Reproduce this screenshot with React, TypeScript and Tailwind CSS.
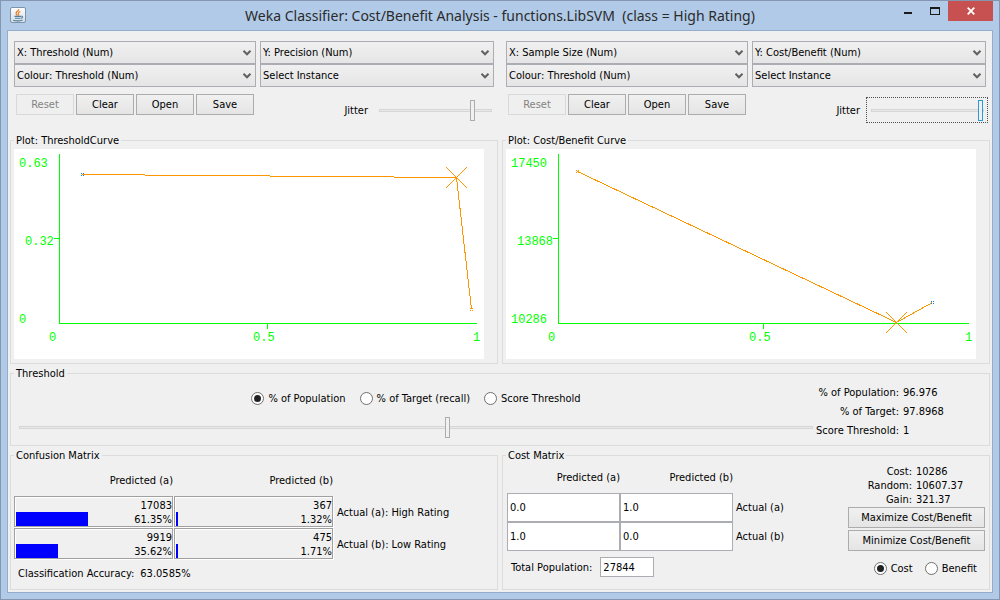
import { useState, type ReactNode } from "react";

function JavaIcon() {
  return (
    <svg width="17" height="17" viewBox="0 0 17 17" aria-hidden="true">
      <defs>
        <linearGradient id="java-bg" x1="0" y1="0" x2="0" y2="1">
          <stop offset="0" stopColor="#ffffff" />
          <stop offset="1" stopColor="#d3dce4" />
        </linearGradient>
      </defs>
      <rect x="0.5" y="0.5" width="15" height="15" rx="1.5" fill="url(#java-bg)" stroke="#7d93a8" />
      <path d="M8.6 2.2c.6 1.700-2.700 2.400-2.500 4.100.1.900 1.100 1.500 1.300 2.300" fill="none" stroke="#ee7a1c" strokeWidth="1.300" />
      <path d="M10.400 4.600c-1.900.7-2.600 1.500-1.900 2.400.4.600.3 1.100-.2 1.600" fill="none" stroke="#ee7a1c" strokeWidth="1.100" />
      <path d="M4.500 9.400h6.500M5 11.200h5.500M11.200 9.300c1.900-.4 1.900 1.500-.2 2" fill="none" stroke="#4f7f9e" strokeWidth="1.100" />
      <path d="M3.200 13.200c2.500.8 6.500.8 9.300-.2" fill="none" stroke="#4f7f9e" strokeWidth="1.200" />
    </svg>
  );
}

function TitleBar() {
  return (
    <header className="grid h-[29px] grid-cols-[1fr_auto_1fr]">
      <div className="pt-1.5 pl-[3px]">
        <JavaIcon />
      </div>
      <h1 className="pt-1 font-['Noto_Sans',sans-serif] text-[14px] leading-[22px] whitespace-pre text-[#2b2b2b]">
        {"Weka Classifier: Cost/Benefit Analysis - functions.LibSVM  (class = High Rating)"}
      </h1>
      <div className="flex justify-end">
        <button type="button" aria-label="Minimize" className="flex h-5 w-[27px] items-center justify-center">
          <svg width="8" height="8" viewBox="0 0 8 8"><path d="M0 5h8v2H0z" fill="#1a1a1a" /></svg>
        </button>
        <button type="button" aria-label="Maximize" className="flex h-5 w-[27px] items-center justify-center">
          <svg width="10" height="8" viewBox="0 0 10 8" shapeRendering="crispEdges">
            <path d="M0 0h10v8H0zM1 2v5h8V2z" fill="#1a1a1a" fillRule="evenodd" />
          </svg>
        </button>
        <button type="button" aria-label="Close" className="flex h-5 w-[45px] items-center justify-center bg-[#c75050]">
          <svg width="8" height="8" viewBox="0 0 8 8"><path d="M.7.7l6.600 6.600M7.300.7L.7 7.300" stroke="#fff" strokeWidth="1.800" /></svg>
        </button>
      </div>
    </header>
  );
}

function Combo({ label, value }: { label: string; value: string }) {
  return (
    <div className="relative">
      <select
        aria-label={label}
        className="block h-[23px] w-full appearance-none border border-[#abadb3] bg-linear-to-b from-[#f0f0f0] to-[#e5e5e5] pr-5 pl-0.5"
      >
        <option>{value}</option>
      </select>
      <svg className="pointer-events-none absolute top-2 right-1" width="10" height="8" viewBox="0 0 10 8" aria-hidden="true">
        <path d="M1.500 1.800L5 5.300l3.500-3.500" fill="none" stroke="#606060" strokeWidth="2" />
      </svg>
    </div>
  );
}

function PushButton({ children, disabled, className }: { children: ReactNode; disabled?: boolean; className?: string }) {
  return (
    <button
      type="button"
      disabled={disabled}
      className={
        "h-[21px] border border-[#acacac] bg-linear-to-b from-[#f0f0f0] to-[#e5e5e5] disabled:border-[#d9d9d9] disabled:from-[#efefef] disabled:to-[#efefef] disabled:text-[#838383] " +
        (className ?? "")
      }
    >
      {children}
    </button>
  );
}

function Slider({ id, label, initial, active }: { id: string; label?: string; initial: number; active?: boolean }) {
  const thumb = active
    ? "[&::-webkit-slider-thumb]:border-[#2a9bd5]"
    : "[&::-webkit-slider-thumb]:border-[#acacac]";
  return (
    <input
      id={id}
      type="range"
      aria-label={label}
      min={0}
      max={100}
      defaultValue={initial}
      className={
        "block h-[21px] w-full appearance-none bg-transparent outline-none [&::-webkit-slider-runnable-track]:h-[3px] [&::-webkit-slider-runnable-track]:border [&::-webkit-slider-runnable-track]:border-[#d6d6d6] [&::-webkit-slider-runnable-track]:bg-[#e7eaea] [&::-webkit-slider-thumb]:-mt-2.5 [&::-webkit-slider-thumb]:h-[21px] [&::-webkit-slider-thumb]:w-[5px] [&::-webkit-slider-thumb]:appearance-none [&::-webkit-slider-thumb]:border [&::-webkit-slider-thumb]:bg-[#f0f0f0] " +
        thumb
      }
    />
  );
}

function Radio({ name, label, checked, onSelect }: { name: string; label: string; checked: boolean; onSelect: () => void }) {
  return (
    <label className="flex h-3.5 items-center gap-1">
      <input
        type="radio"
        name={name}
        checked={checked}
        onChange={onSelect}
        className="grid size-[13px] shrink-0 appearance-none place-items-center rounded-full border border-[#707070] bg-white before:size-[7px] before:rounded-full checked:before:bg-[#212121]"
      />
      <span className="pt-0.5">{label}</span>
    </label>
  );
}

function Group({ title, children }: { title: string; children: ReactNode }) {
  return (
    <fieldset className="min-w-0 border border-[#dcdcdc]">
      <legend className="ml-[3px] h-3.5 px-0.5">{title}</legend>
      {children}
    </fieldset>
  );
}

type ControlsProps = { id: string; x: string; y: string; jitter: number; focused?: boolean };

function PlotControls({ id, x, y, jitter, focused }: ControlsProps) {
  return (
    <div className="pb-2.5">
      <div className="grid grid-cols-[242fr_234fr] gap-x-1 px-1">
        <Combo label="X axis" value={x} />
        <Combo label="Y axis" value={y} />
        <Combo label="Colour" value="Colour: Threshold (Num)" />
        <Combo label="Instance" value="Select Instance" />
      </div>
      <div className="flex items-start pt-[7px] pr-0.5 pl-1.5">
        <div className="flex gap-0.5">
          <PushButton disabled className="w-[58px]">Reset</PushButton>
          <PushButton className="w-[58px]">Clear</PushButton>
          <PushButton className="w-[58px]">Open</PushButton>
          <PushButton className="w-[58px]">Save</PushButton>
        </div>
        <div className="ml-auto flex items-center gap-1.5 pt-[3px]">
          <label htmlFor={id} className="pt-0.5">Jitter</label>
          <div className={"flex h-[26px] w-[122px] items-center border pr-[3px] pl-1 " + (focused ? "border-dotted border-[#505050]" : "border-transparent")}>
            <Slider id={id} initial={jitter} active={focused} />
          </div>
        </div>
      </div>
    </div>
  );
}

type PlotProps = {
  title: string;
  axisX: number;
  midX: number;
  yLabels: [string, string, string];
  lines: string[];
  dots: { x: number; y: number; color: string }[];
  cross: { x: number; y: number };
};

function Plot({ title, axisX, midX, yLabels, lines, dots, cross }: PlotProps) {
  return (
    <Group title={title}>
      <div className="pt-0.5 pr-[13px] pb-1 pl-[3px]">
        <svg
          role="img"
          aria-label={title}
          className="block h-[210px] w-full bg-white font-['Liberation_Mono',monospace] text-[12px]"
          viewBox="0 0 470 210"
        >
          <g shapeRendering="crispEdges" fill="none" strokeWidth="1">
            <path
              stroke="#00ff00"
              d={`M${axisX + 0.5} 5V174.5H463M${axisX - 5} 89.500H${axisX}M${midX + 0.5} 175v5`}
            />
            {lines.map((d) => (
              <path key={d} d={d} stroke="#ff9600" />
            ))}
            <path
              stroke="#ff9600"
              d={`M${cross.x - 10} ${cross.y - 10}l21 21M${cross.x - 10} ${cross.y + 11}l21 -21`}
            />
            {dots.map((p) => (
              <path
                key={p.x}
                d={`M${p.x - 1} ${p.y - 1}h1v1h-1zM${p.x + 1} ${p.y - 1}h1v1h-1zM${p.x - 1} ${p.y + 1}h1v1h-1zM${p.x + 1} ${p.y + 1}h1v1h-1z`}
                fill={p.color}
              />
            ))}
          </g>
          <g fill="#00ff00">
            <text x="5" y="18">{yLabels[0]}</text>
            <text x="11" y="96">{yLabels[1]}</text>
            <text x="5" y="174">{yLabels[2]}</text>
            <text x={axisX - 10} y="192">0</text>
            <text x={midX - 14} y="192">0.5</text>
            <text x="459" y="192">1</text>
          </g>
        </svg>
      </div>
    </Group>
  );
}

function ThresholdGroup() {
  const [mode, setMode] = useState("% of Population");
  const stats = [
    ["% of Population:", "96.976"],
    ["% of Target:", "97.8968"],
    ["Score Threshold:", "1"],
  ];
  return (
    <Group title="Threshold">
      <div className="flex h-[65px] pr-[46px] pl-2">
        <div className="flex flex-1 flex-col justify-end gap-3 pb-[7px]">
          <div className="flex justify-center gap-3.5">
            {["% of Population", "% of Target (recall)", "Score Threshold"].map((m) => (
              <Radio key={m} name="threshold" label={m} checked={mode === m} onSelect={() => setMode(m)} />
            ))}
          </div>
          <Slider id="threshold" label="Threshold" initial={54} />
        </div>
        <dl className="grid w-[130px] grid-cols-[86px_auto] content-start gap-x-1 pt-[3px] leading-[19px] whitespace-nowrap">
          {stats.map(([k, v]) => (
            <div key={k} className="contents">
              <dt className="text-right">{k}</dt>
              <dd>{v}</dd>
            </div>
          ))}
        </dl>
      </div>
    </Group>
  );
}

function CountCell({ count, percent }: { count: number; percent: number }) {
  return (
    <td className="border border-[#a0a0a0] p-0 shadow-[1px_1px_0_#fff,inset_1px_1px_0_#fff]">
      <div className="mt-px ml-px text-right">
        <div className="h-3.5">{count}</div>
        <div className="relative h-3.5">
          <div className="absolute inset-y-0 left-0 w-3/4">
            <div className="h-full bg-[#0000ff]" style={{ width: `${percent}%` }} />
          </div>
          <span className="relative">{percent}%</span>
        </div>
      </div>
    </td>
  );
}

function ConfusionGroup() {
  return (
    <Group title="Confusion Matrix">
      <div className="pl-0.5">
        <table className="border-separate border-spacing-px">
          <thead>
            <tr className="h-8">
              <th className="w-[159px] p-0 pt-1 text-right font-normal">Predicted (a)</th>
              <th className="w-[159px] p-0 pt-1 text-right font-normal">Predicted (b)</th>
              <td />
            </tr>
          </thead>
          <tbody>
            <tr className="h-[31px]">
              <CountCell count={17083} percent={61.35} />
              <CountCell count={367} percent={1.32} />
              <th scope="row" className="p-0 pt-0.5 pl-[3px] text-left font-normal">Actual (a): High Rating</th>
            </tr>
            <tr className="h-[31px]">
              <CountCell count={9919} percent={35.62} />
              <CountCell count={475} percent={1.71} />
              <th scope="row" className="p-0 pt-0.5 pl-[3px] text-left font-normal">Actual (b): Low Rating</th>
            </tr>
          </tbody>
        </table>
        <p className="flex gap-1.5 pt-1.5 pb-[7px] pl-[5px]">
          <span>Classification Accuracy:</span>
          <span>63.0585%</span>
        </p>
      </div>
    </Group>
  );
}

function CostCell({ label, value }: { label: string; value: string }) {
  return (
    <td className="p-0">
      <input aria-label={label} defaultValue={value} className="block h-[29px] w-[113px] border border-[#abadb3] bg-white px-0.5" />
    </td>
  );
}

function CostGroup() {
  const [kind, setKind] = useState("Cost");
  const stats = [
    ["Cost:", "10286"],
    ["Random:", "10607.37"],
    ["Gain:", "321.37"],
  ];
  return (
    <Group title="Cost Matrix">
      <div className="flex justify-between pr-1 pl-1">
        <div>
          <table className="border-collapse">
            <thead>
              <tr className="h-[31px]">
                <th className="p-0 text-right font-normal">Predicted (a)</th>
                <th className="p-0 text-right font-normal">Predicted (b)</th>
                <td />
              </tr>
            </thead>
            <tbody>
              <tr>
                <CostCell label="Actual (a), predicted (a)" value="0.0" />
                <CostCell label="Actual (a), predicted (b)" value="1.0" />
                <th scope="row" className="p-0 pl-[3px] text-left font-normal">Actual (a)</th>
              </tr>
              <tr>
                <CostCell label="Actual (b), predicted (a)" value="1.0" />
                <CostCell label="Actual (b), predicted (b)" value="0.0" />
                <th scope="row" className="p-0 pl-[3px] text-left font-normal">Actual (b)</th>
              </tr>
            </tbody>
          </table>
          <div className="flex items-center gap-2 pt-1.5 pl-1">
            <label htmlFor="population" className="pt-0.5">Total Population:</label>
            <input id="population" defaultValue="27844" className="h-5 w-[54px] border border-[#abadb3] bg-white px-0.5" />
          </div>
        </div>
        <div className="flex w-[137px] flex-col pt-[3px]">
          <dl className="grid grid-cols-[64px_auto] gap-x-1 leading-[14px]">
            {stats.map(([k, v]) => (
              <div key={k} className="contents">
                <dt className="text-right">{k}</dt>
                <dd>{v}</dd>
              </div>
            ))}
          </dl>
          <div className="flex flex-col gap-0.5">
            <PushButton>Maximize Cost/Benefit</PushButton>
            <PushButton>Minimize Cost/Benefit</PushButton>
          </div>
          <div className="flex justify-end gap-3 pt-2.5 pr-2">
            {["Cost", "Benefit"].map((k) => (
              <Radio key={k} name="kind" label={k} checked={kind === k} onSelect={() => setKind(k)} />
            ))}
          </div>
        </div>
      </div>
    </Group>
  );
}

const ORANGE = "#ff9600";
const BLUE = "#1e82d2";

export default function App() {
  return (
    <div className="flex min-h-screen flex-col border border-[#8496b0] bg-[#b0cae7] px-1.5 pb-1.5 font-['DejaVu_Sans_Condensed','Noto_Sans',sans-serif] text-[11px] leading-4 text-black">
      <TitleBar />
      <main className="flex flex-1 flex-col gap-0.5 border border-[#93adcb] bg-[#f0f0f0] px-0.5 pt-2.5 pb-0.5">
        <div className="grid grid-cols-2 gap-x-1">
          <PlotControls id="jitter-curve" x="X: Threshold (Num)" y="Y: Precision (Num)" jitter={85} />
          <PlotControls id="jitter-cost" x="X: Sample Size (Num)" y="Y: Cost/Benefit (Num)" jitter={100} focused />
          <Plot
            title="Plot: ThresholdCurve"
            axisX={45}
            midX={253}
            yLabels={["0.63", "0.32", "0"]}
            lines={["M68 25.500H131", "M131 26.500H256", "M256 27.500H380", "M380 28.500H442", "M442.500 28.500L457.500 160.500"]}
            dots={[
              { x: 68, y: 25, color: BLUE },
              { x: 457, y: 160, color: ORANGE },
            ]}
            cross={{ x: 442, y: 28 }}
          />
          <Plot
            title="Plot: Cost/Benefit Curve"
            axisX={52}
            midX={257}
            yLabels={["17450", "13868", "10286"]}
            lines={["M71.500 22.500L390.500 173.500L426.500 153.500"]}
            dots={[
              { x: 71, y: 22, color: ORANGE },
              { x: 426, y: 153, color: BLUE },
            ]}
            cross={{ x: 390, y: 173 }}
          />
        </div>
        <ThresholdGroup />
        <div className="grid flex-1 grid-cols-2 gap-x-1">
          <ConfusionGroup />
          <CostGroup />
        </div>
      </main>
    </div>
  );
}
